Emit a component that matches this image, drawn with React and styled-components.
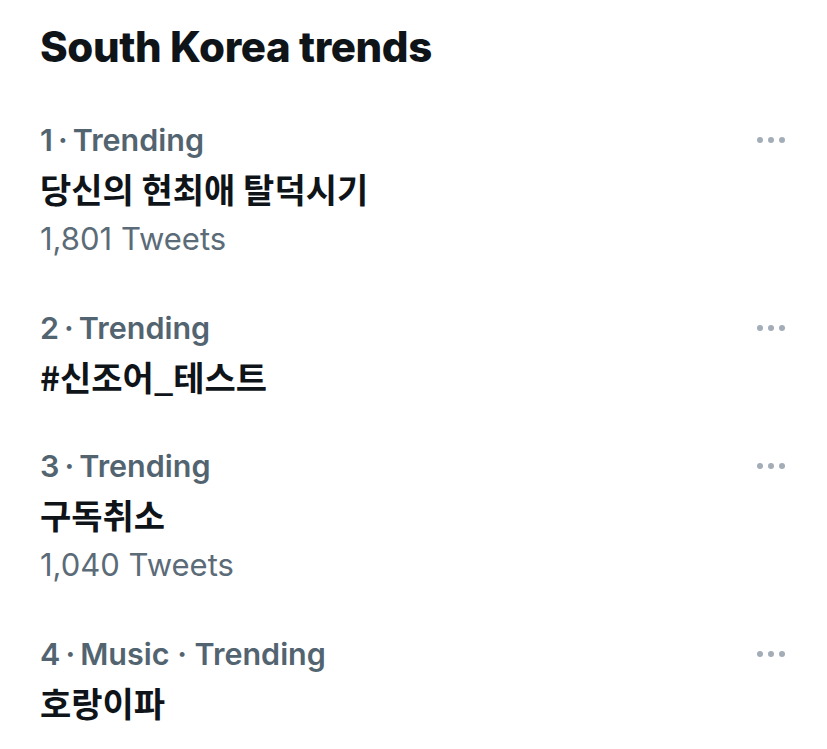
import styled, { createGlobalStyle } from "styled-components";

const GlobalStyle = createGlobalStyle`
  html, body {
    margin: 0;
    padding: 0;
    background: #ffffff;
  }
  body {
    font-family: Inter, "Noto Sans CJK KR", sans-serif;
    color: #0f1419;
  }
`;

const Panel = styled.section`
  width: 827px;
  padding: 22px 0 0 40px;
  box-sizing: border-box;
`;

const Heading = styled.h1`
  margin: 0 0 44px;
  font-size: 42px;
  line-height: 50px;
  font-weight: 800;
  letter-spacing: -0.4px;
  color: #0f1419;
`;

const List = styled.div`
  display: flex;
  flex-direction: column;
`;

const Row = styled.div`
  display: flex;
  align-items: flex-start;
  justify-content: space-between;
  padding: 0 42px 40px 0;
`;

const Body = styled.div`
  display: flex;
  flex-direction: column;
`;

const Meta = styled.div`
  font-size: 30.5px;
  line-height: 48px;
  font-weight: 600;
  color: #536471;
`;

const Title = styled.div`
  font-family: "Noto Sans CJK KR", Inter, sans-serif;
  font-size: 34px;
  line-height: 50px;
  font-weight: 700;
  color: #0f1419;
`;

const Count = styled.div`
  font-size: 31px;
  line-height: 50px;
  font-weight: 400;
  color: #5b6b78;
`;

const More = styled.button`
  display: flex;
  gap: 5px;
  align-items: center;
  height: 48px;
  padding: 0;
  border: 0;
  background: none;
`;

const Dot = styled.span`
  width: 6px;
  height: 6px;
  border-radius: 50%;
  background: #a3adb8;
`;

const trends = [
  { rank: 1, tags: ["Trending"], title: "당신의 현최애 탈덕시기", count: "1,801 Tweets" },
  { rank: 2, tags: ["Trending"], title: "#신조어_테스트" },
  { rank: 3, tags: ["Trending"], title: "구독취소", count: "1,040 Tweets" },
  { rank: 4, tags: ["Music", "Trending"], title: "호랑이파" },
];

export default function App() {
  return (
    <>
      <GlobalStyle />
      <Panel>
        <Heading>South Korea trends</Heading>
        <List>
          {trends.map((t) => (
            <Row key={t.title}>
              <Body>
                <Meta>
                  {t.rank}
                  {"\u2009·\u2009"}
                  {t.tags.join(" · ")}
                </Meta>
                <Title>{t.title}</Title>
                {t.count && <Count>{t.count}</Count>}
              </Body>
              <More aria-label="More">
                <Dot />
                <Dot />
                <Dot />
              </More>
            </Row>
          ))}
        </List>
      </Panel>
    </>
  );
}
